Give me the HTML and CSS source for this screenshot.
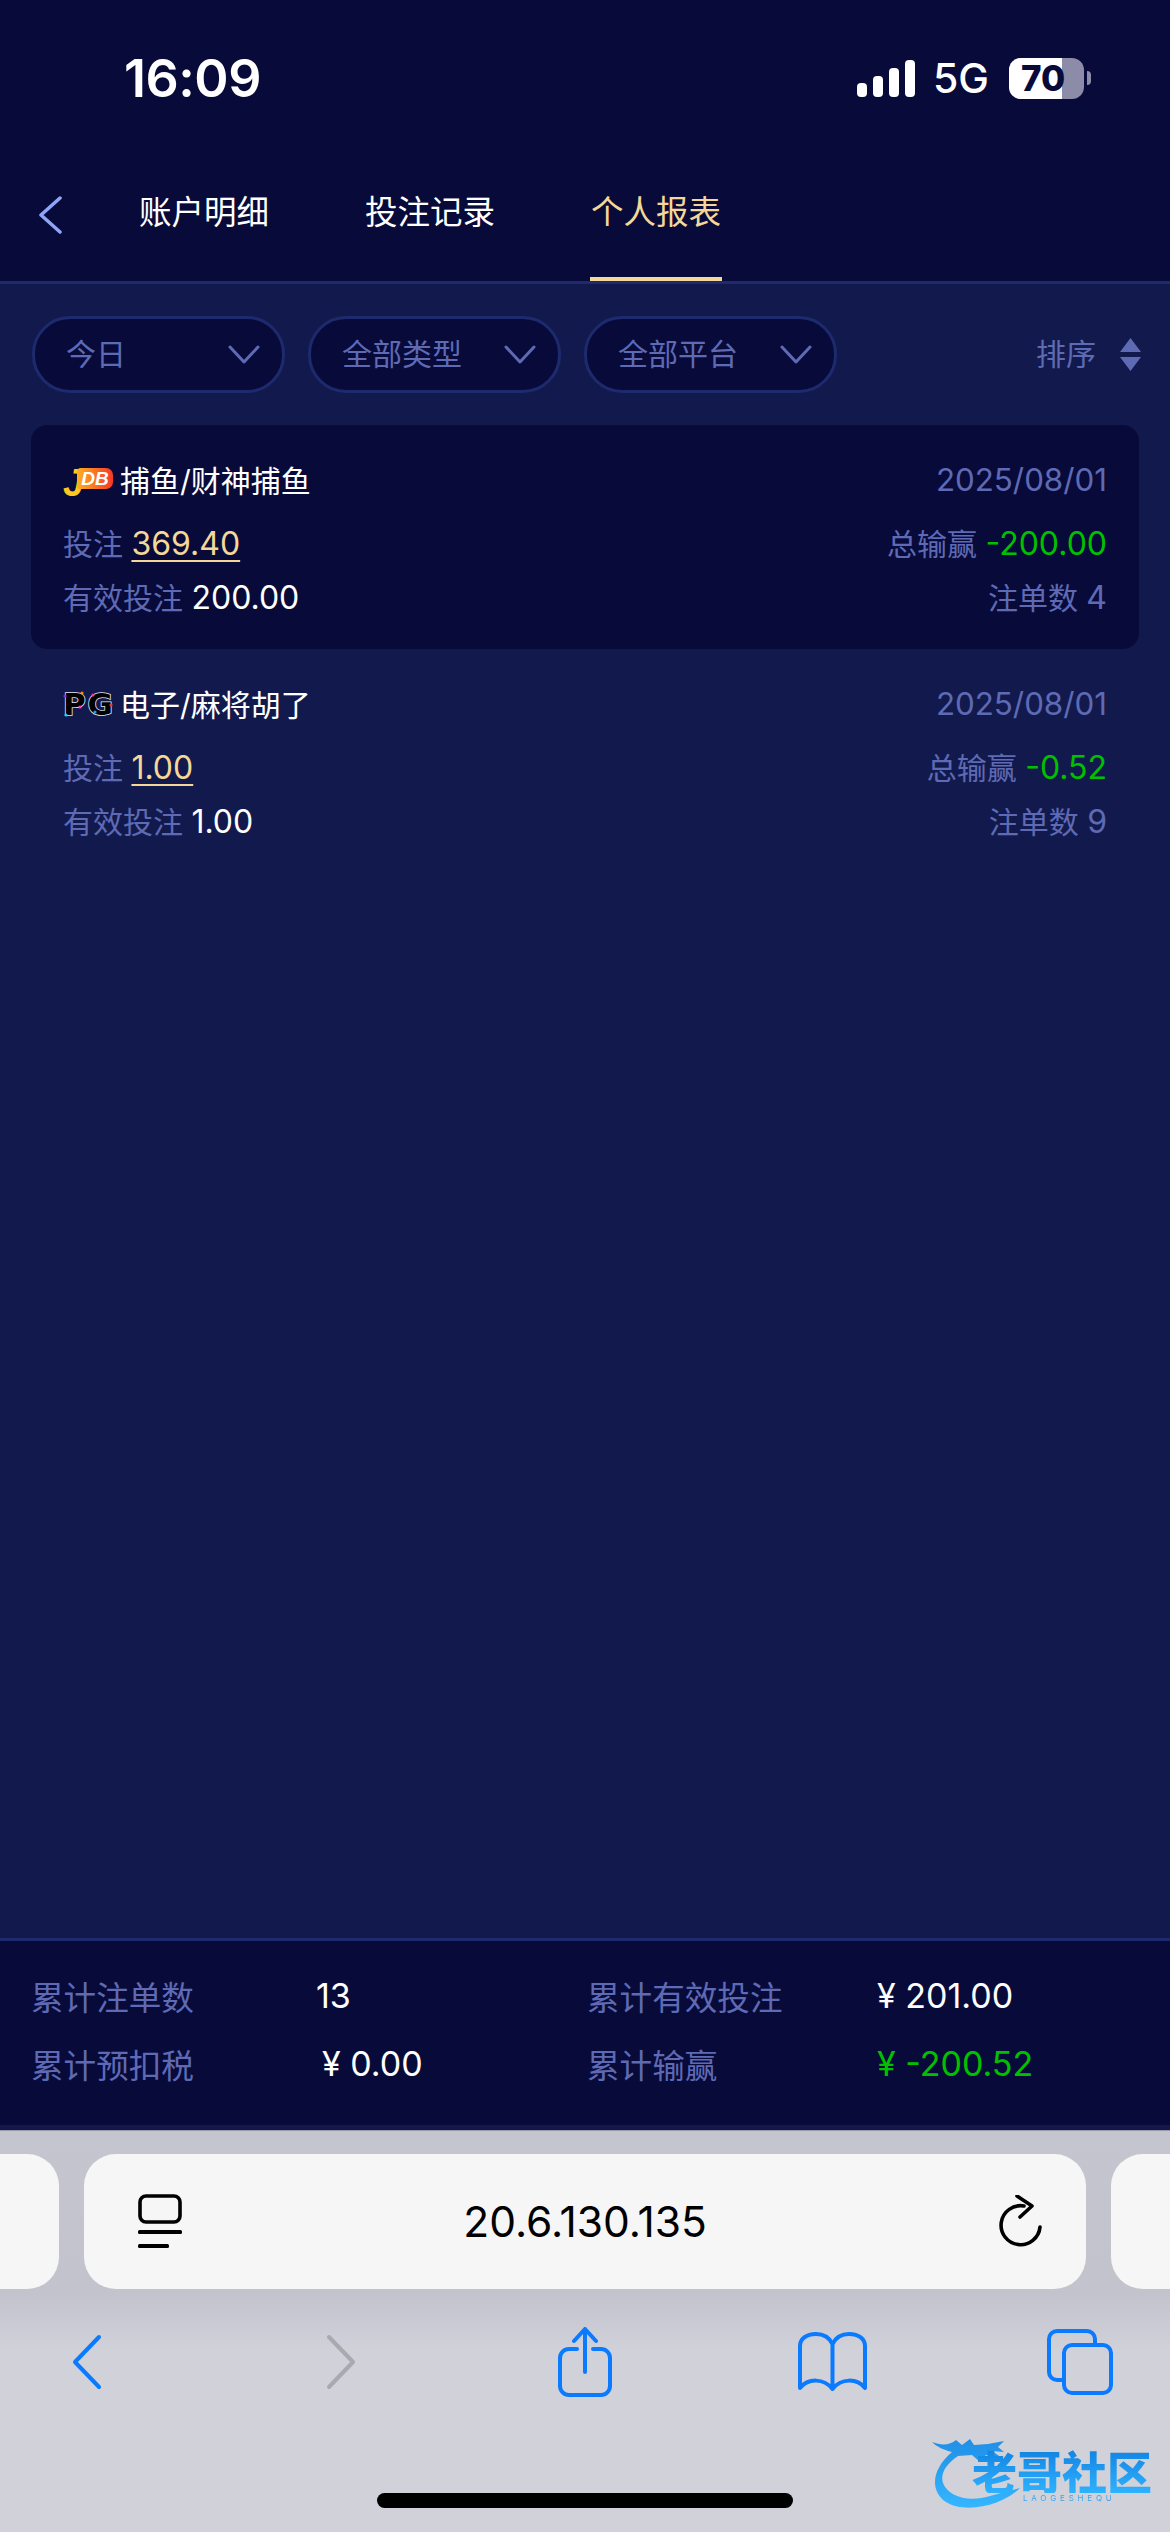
FILE: index.html

```html
<!DOCTYPE html>
<html lang="zh-CN">
<head>
  <meta charset="UTF-8">
  <title>个人报表</title>
  <meta name="viewport" content="width=device-width, initial-scale=1.0">
  <link rel="stylesheet" href="styles.css">
</head>
<body>
  <div class="page">
    <header class="top">
      <div class="status">
        <span class="time">16:09</span>
        <div class="status-right">
          <svg class="signal" width="58" height="37" viewBox="0 0 58 37">
            <rect x="0" y="23" width="10" height="14" rx="4"/>
            <rect x="16" y="16" width="10" height="21" rx="4"/>
            <rect x="32" y="8" width="10" height="29" rx="4"/>
            <rect x="48" y="0" width="10" height="37" rx="4"/>
          </svg>
          <span class="net">5G</span>
          <div class="battery"><div class="battery-level"></div><span class="battery-num">70</span></div>
          <div class="battery-tip"></div>
        </div>
      </div>
      <nav class="tabs">
        <svg class="tabs-back" width="24" height="38" viewBox="0 0 24 38">
          <path d="M22 2 L3 19 L22 36" fill="none" stroke="#8fa6f7" stroke-width="3.5" stroke-linecap="round" stroke-linejoin="round"/>
        </svg>
        <a class="tab"><span>账户明细</span></a>
        <a class="tab"><span>投注记录</span></a>
        <a class="tab tab-active"><span>个人报表</span></a>
      </nav>
    </header>

    <main class="content">
      <div class="filters">
        <div class="pill"><span>今日</span><svg width="32" height="19" viewBox="0 0 32 19"><path d="M2 2 L16 17 L30 2" class="pill-arrow"/></svg></div>
        <div class="pill"><span>全部类型</span><svg width="32" height="19" viewBox="0 0 32 19"><path d="M2 2 L16 17 L30 2" class="pill-arrow"/></svg></div>
        <div class="pill"><span>全部平台</span><svg width="32" height="19" viewBox="0 0 32 19"><path d="M2 2 L16 17 L30 2" class="pill-arrow"/></svg></div>
        <div class="sort">
          <span>排序</span>
          <svg width="21" height="33" viewBox="0 0 21 33"><path d="M10.5 0 L21 14 H0 Z M0 19 H21 L10.5 33 Z" fill="#5f6ab5"/></svg>
        </div>
      </div>

      <div class="list">
        <div class="item item-active">
          <div class="row">
            <div class="name">
              <div class="logo logo-jdb"><span class="jdb-j">J</span><span class="jdb-rest">DB</span></div>
              <span>捕鱼/财神捕鱼</span>
            </div>
            <span class="muted date">2025/08/01</span>
          </div>
          <div class="row">
            <div><span class="muted">投注</span> <span class="bet num">369.40</span></div>
            <div><span class="muted">总输赢</span> <span class="loss num">-200.00</span></div>
          </div>
          <div class="row">
            <div><span class="muted">有效投注</span> <span class="white num">200.00</span></div>
            <div class="muted">注单数 <span class="num">4</span></div>
          </div>
        </div>

        <div class="item">
          <div class="row">
            <div class="name">
              <div class="logo logo-pg">
                <span class="pg-letter">P</span><span class="pg-letter">G</span>
                <svg class="pg-dots" width="50" height="26" viewBox="0 0 50 26">
                  <circle cx="2" cy="5" r="1.6" fill="#8a2be2"/>
                  <circle cx="19" cy="2" r="1.6" fill="#ff8a00"/>
                  <circle cx="17" cy="16" r="1.6" fill="#ff3fc0"/>
                  <circle cx="3" cy="24" r="1.6" fill="#22c8ff"/>
                  <circle cx="30" cy="4" r="1.6" fill="#e83fb0"/>
                  <circle cx="48" cy="14" r="1.6" fill="#f03a20"/>
                  <circle cx="32" cy="21" r="1.6" fill="#229bff"/>
                </svg>
              </div>
              <span>电子/麻将胡了</span>
            </div>
            <span class="muted date">2025/08/01</span>
          </div>
          <div class="row">
            <div><span class="muted">投注</span> <span class="bet num">1.00</span></div>
            <div><span class="muted">总输赢</span> <span class="loss num">-0.52</span></div>
          </div>
          <div class="row">
            <div><span class="muted">有效投注</span> <span class="white num">1.00</span></div>
            <div class="muted">注单数 <span class="num">9</span></div>
          </div>
        </div>
      </div>
    </main>

    <section class="totals">
      <span class="muted">累计注单数</span><span class="white total-val">13</span>
      <span class="muted">累计有效投注</span><span class="white total-val">¥ 201.00</span>
      <span class="muted">累计预扣税</span><span class="white total-val total-tax">¥ 0.00</span>
      <span class="muted">累计输赢</span><span class="loss total-val">¥ -200.52</span>
    </section>
    <div class="totals-edge"></div>

    <footer class="browser">
      <div class="address">
        <div class="side side-left"></div>
        <div class="url">
          <svg class="url-page" width="44" height="55" viewBox="0 0 44 55">
            <rect x="2" y="2" width="40" height="26" rx="6" fill="none" stroke="#000" stroke-width="3.6"/>
            <rect x="0" y="36" width="44" height="4" rx="1.5"/>
            <rect x="0" y="50" width="31" height="4" rx="1.5"/>
          </svg>
          <span class="url-text">20.6.130.135</span>
          <svg class="url-reload" width="44" height="54" viewBox="0 0 44 54">
            <path d="M26 11 A19.5 19.5 0 1 0 42 32" fill="none" stroke="#000" stroke-width="3.6" stroke-linecap="round"/>
            <path d="M19 1 L34 11 L22 22" fill="none" stroke="#000" stroke-width="3.6" stroke-linecap="round" stroke-linejoin="round"/>
          </svg>
        </div>
        <div class="side side-right"></div>
      </div>

      <div class="tools">
        <svg class="tool-back" width="30" height="56" viewBox="0 0 30 56"><path d="M27 3 L3 28 L27 53" class="tool-line"/></svg>
        <svg class="tool-forward" width="30" height="56" viewBox="0 0 30 56"><path d="M3 3 L27 28 L3 53" class="tool-line tool-off"/></svg>
        <svg class="tool-share" width="54" height="70" viewBox="0 0 54 70">
          <path d="M19 22 H11 A9 9 0 0 0 2 31 V59 A9 9 0 0 0 11 68 H43 A9 9 0 0 0 52 59 V31 A9 9 0 0 0 43 22 H35" class="tool-line"/>
          <path d="M27 45 V2 M16 14 L27 2 L38 14" class="tool-line"/>
        </svg>
        <svg class="tool-book" width="69" height="60" viewBox="0 0 69 60">
          <path d="M34.5 12 C31 5 25 2 18 2 C8 2 2 7 2 14 V56 C10 46 26 46 34.5 57 C43 46 59 46 67 56 V14 C67 7 61 2 51 2 C44 2 38 5 34.5 12 Z M34.5 12 V57" class="tool-line"/>
        </svg>
        <svg class="tool-tabs" width="66" height="66" viewBox="0 0 66 66">
          <rect x="17" y="16" width="47" height="48" rx="8" class="tool-line"/>
          <path d="M15 51 H10 A8 8 0 0 1 2 43 V10 A8 8 0 0 1 10 2 H40 A8 8 0 0 1 48 10 V16" class="tool-line"/>
        </svg>
      </div>

      <div class="home-bar"></div>

      <div class="mark">
        <svg width="100" height="75" viewBox="0 0 100 75">
          <defs>
            <linearGradient id="markFill" x1="0" x2="0" y1="0" y2="1">
              <stop offset="0" stop-color="#1f8fe6"/>
              <stop offset="1" stop-color="#35b6ff"/>
            </linearGradient>
          </defs>
          <path d="M0 6 C10 10 18 9 24 4 L30 9 L38 3 L42 9 L56 8 L72 5 L66 11 L72 16 L60 15 L70 22 L54 19 L48 26 L40 19 L26 20 C14 28 8 38 11 47 C16 60 36 67 58 60 L88 52 C70 70 32 78 14 66 C-2 55 -1 34 20 16 C12 14 5 11 0 6 Z" fill="url(#markFill)"/>
        </svg>
        <span class="mark-name">老哥社区</span>
        <span class="mark-sub">LAOGESHEQU</span>
      </div>
    </footer>
  </div>
</body>
</html>
```

FILE: styles.css

```css
* {
  box-sizing: border-box;
}
body {
  margin: 0;
  font-family: Inter, "Noto Sans CJK SC", sans-serif;
  background-color: #121a4d;
  color: #ffffff;
}
.page {
  display: flex;
  flex-direction: column;
  height: 2532px;
  overflow: hidden;
}

/* header */
.top {
  background-color: #080b3a;
  border-bottom: 3px solid #1d2a6e;
}
.status {
  display: flex;
  justify-content: space-between;
  align-items: center;
  height: 148px;
  padding: 8px 79px 0 124px;
}
.time {
  font-size: 52px;
  font-weight: 600;
  letter-spacing: -0.5px;
}
.status-right {
  display: flex;
  align-items: center;
}
.signal {
  fill: #ffffff;
}
.net {
  margin-left: 18px;
  font-size: 41px;
  font-weight: 500;
}
.battery {
  position: relative;
  width: 75px;
  height: 41px;
  margin-left: 20px;
  border-radius: 12px;
  background-color: #8c8ca8;
  overflow: hidden;
  text-align: center;
}
.battery-level {
  width: 53px;
  height: 100%;
  background-color: #ffffff;
}
.battery-num {
  position: absolute;
  top: 0;
  left: 0;
  width: 68px;
  color: #080b3a;
  font-size: 35px;
  font-weight: 800;
  line-height: 41px;
}
.battery-tip {
  width: 4px;
  height: 14px;
  margin-left: 3px;
  border-radius: 0 4px 4px 0;
  background-color: #8c8ca8;
}
.tabs {
  display: flex;
  height: 133px;
  padding-left: 38px;
}
.tabs-back {
  align-self: center;
  margin-right: 76px;
}
.tab {
  display: flex;
  align-items: center;
  padding: 0 1px 6px;
  margin-right: 94px;
  border-bottom: 4px solid transparent;
  font-size: 32.5px;
}
.tab-active {
  color: #f5d898;
  border-bottom-color: #f5d898;
}

/* list */
.content {
  flex: 1;
  padding: 32px 31px 0;
}
.filters {
  display: flex;
  align-items: center;
  gap: 23px;
  margin-left: 1px;
  height: 77px;
}
.pill {
  display: flex;
  justify-content: space-between;
  align-items: center;
  width: 253px;
  height: 77px;
  padding: 0 22px 0 31px;
  border: 3px solid #1d2a6e;
  border-radius: 38px;
  background-color: #080b3a;
  color: #5f6ab5;
  font-size: 30px;
}
.pill span,
.sort span {
  margin-bottom: 5px;
}
.pill-arrow {
  fill: none;
  stroke: #5f6ab5;
  stroke-width: 3;
  stroke-linecap: round;
  stroke-linejoin: round;
}
.sort {
  display: flex;
  align-items: center;
  gap: 24px;
  margin: 0 -2px 0 auto;
  color: #5f6ab5;
  font-size: 30px;
}
.list {
  margin-top: 32px;
}
.item {
  display: flex;
  flex-direction: column;
  height: 224px;
  padding: 27px 32px 24px 32px;
  border-radius: 16px;
  font-size: 30px;
}
.item-active {
  background-color: #080b3a;
}
.row {
  display: flex;
  justify-content: space-between;
  align-items: center;
  height: 54px;
}
.row:first-child {
  margin-bottom: 9px;
}
.num {
  font-size: 32px;
}
.date {
  margin-top: 2px;
  font-size: 31.3px;
}
.name {
  display: flex;
  align-items: center;
  gap: 7px;
}
.logo {
  flex-shrink: 0;
  width: 50px;
}
.logo-jdb {
  display: flex;
  height: 30px;
  margin-top: 8px;
  font-family: "Liberation Sans", sans-serif;
  font-weight: 700;
  font-style: italic;
}
.jdb-j {
  width: 14px;
  color: #ffc81e;
  font-size: 38px;
  line-height: 30px;
}
.jdb-rest {
  width: 36px;
  height: 21px;
  border-radius: 4px 7px 7px 2px;
  background: linear-gradient(90deg, #ffb01e, #f5372a);
  color: #ffffff;
  font-size: 19px;
  line-height: 21px;
  text-align: center;
}
.logo-pg {
  position: relative;
  display: flex;
  justify-content: space-between;
  height: 26px;
  margin-top: 2px;
  font-family: "DejaVu Sans", sans-serif;
  font-size: 31px;
  font-weight: 700;
  line-height: 26px;
}
.pg-letter {
  color: #000000;
  -webkit-text-stroke: 1.6px #e8e8f0;
  paint-order: stroke fill;
}
.pg-dots {
  position: absolute;
  top: 0;
  left: 0;
}
.muted {
  color: #5f6ab5;
}
.white {
  color: #ffffff;
}
.bet {
  color: #f5d898;
  text-decoration: underline;
  text-decoration-thickness: 2px;
  text-underline-offset: 5px;
}
.loss {
  color: #00c000;
}

/* totals */
.totals {
  display: grid;
  grid-template-columns: 285px 271px 290px 1fr;
  grid-auto-rows: 68px;
  align-items: center;
  align-content: start;
  height: 187px;
  padding: 20px 0 0 31px;
  background-color: #080b3a;
  border-top: 3px solid #1d2a6e;
  font-size: 32.6px;
}
.total-val {
  font-size: 34px;
}
.total-tax {
  margin-left: 6px;
}
.totals-edge {
  height: 5px;
  background-color: #12184c;
}

/* browser chrome */
.browser {
  position: relative;
  height: 402px;
  padding-top: 24px;
  background: linear-gradient(#c5c5cf, #c3c3ce 165px, #d1d1da 220px);
  box-shadow: inset 0 1px 0 #9a9aa6;
}
.address {
  display: flex;
  gap: 25px;
  height: 135px;
}
.side {
  width: 59px;
  background-color: #f6f6f6;
}
.side-left {
  border-radius: 0 32px 32px 0;
}
.side-right {
  border-radius: 32px 0 0 32px;
}
.url {
  flex: 1;
  display: grid;
  grid-template-columns: 1fr auto 1fr;
  align-items: center;
  padding: 0 54px;
  border-radius: 32px;
  background-color: #f6f6f6;
  color: #000000;
}
.url-text {
  font-size: 42.5px;
}
.url-reload {
  justify-self: end;
  margin-right: -10px;
}
.tools {
  display: flex;
  align-items: center;
  height: 70px;
  margin-top: 38px;
  padding-left: 72px;
}
.tool-line {
  fill: none;
  stroke: #0a7aff;
  stroke-width: 4;
  stroke-linecap: round;
  stroke-linejoin: round;
}
.tool-off {
  stroke: #a9a9b0;
}
.tool-forward {
  margin-left: 224px;
}
.tool-share {
  margin-left: 202px;
}
.tool-book {
  margin-left: 186px;
}
.tool-tabs {
  margin-left: 180px;
}
.home-bar {
  width: 416px;
  height: 15px;
  margin: 96px auto 0;
  border-radius: 8px;
  background-color: #000000;
}
.mark {
  position: absolute;
  left: 932px;
  top: 306px;
  width: 225px;
  height: 75px;
  filter: blur(0.5px);
}
.mark-name {
  position: absolute;
  left: 40px;
  top: 12px;
  background: linear-gradient(#1182e0, #2fb2ff);
  -webkit-background-clip: text;
  background-clip: text;
  color: transparent;
  font-family: "Noto Sans CJK SC", sans-serif;
  font-size: 45px;
  font-weight: 900;
  line-height: 45px;
  white-space: nowrap;
}
.mark-sub {
  position: absolute;
  left: 91px;
  top: 58px;
  color: #3aa5f0;
  font-size: 8px;
  line-height: 8px;
  letter-spacing: 3.8px;
  white-space: nowrap;
}
```
